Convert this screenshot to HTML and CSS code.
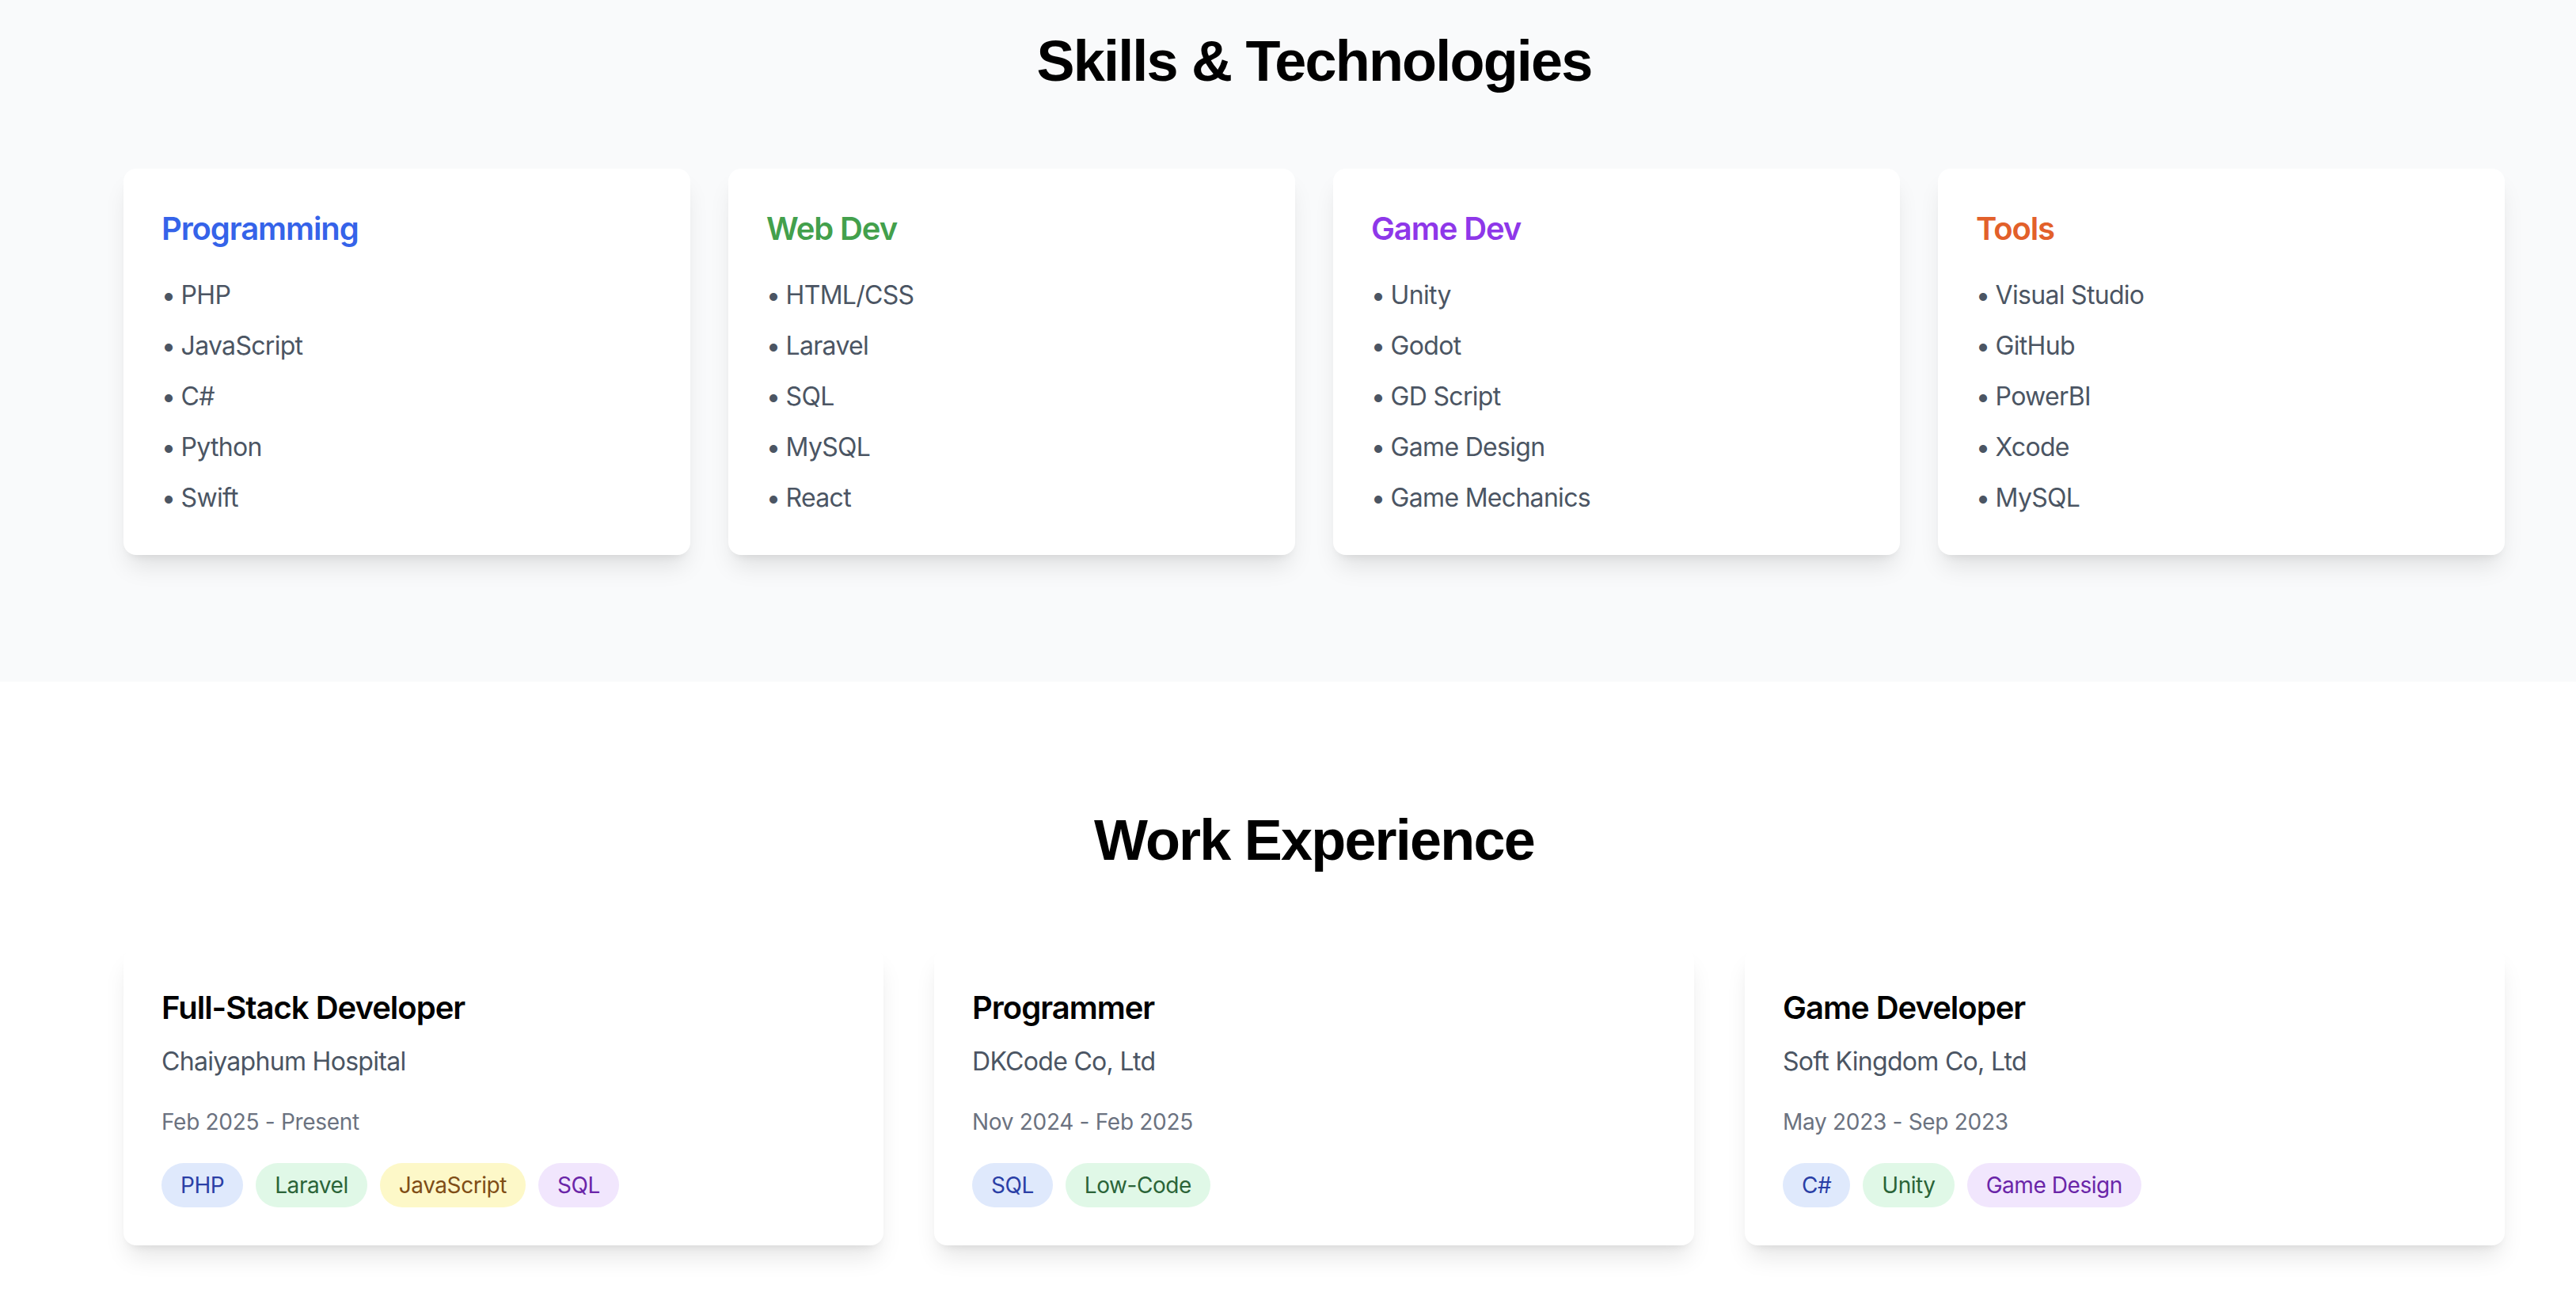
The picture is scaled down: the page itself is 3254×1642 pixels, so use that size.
FILE: index.html
```html
<!DOCTYPE html>
<html lang="en">
<head>
<meta charset="utf-8">
<title>Skills &amp; Experience</title>
<link rel="stylesheet" href="styles.css">
</head>
<body>
<section class="section section-gray">
  <div class="container">
    <h2 class="section-title">Skills &amp; Technologies</h2>
    <div class="skills-grid">
      <div class="card">
        <h3 class="skill-title blue">Programming</h3>
        <ul class="skill-list">
          <li><span class="dot">•</span> PHP</li>
          <li><span class="dot">•</span> JavaScript</li>
          <li><span class="dot">•</span> C#</li>
          <li><span class="dot">•</span> Python</li>
          <li><span class="dot">•</span> Swift</li>
        </ul>
      </div>
      <div class="card">
        <h3 class="skill-title green">Web Dev</h3>
        <ul class="skill-list">
          <li><span class="dot">•</span> HTML/CSS</li>
          <li><span class="dot">•</span> Laravel</li>
          <li><span class="dot">•</span> SQL</li>
          <li><span class="dot">•</span> MySQL</li>
          <li><span class="dot">•</span> React</li>
        </ul>
      </div>
      <div class="card">
        <h3 class="skill-title purple">Game Dev</h3>
        <ul class="skill-list">
          <li><span class="dot">•</span> Unity</li>
          <li><span class="dot">•</span> Godot</li>
          <li><span class="dot">•</span> GD Script</li>
          <li><span class="dot">•</span> Game Design</li>
          <li><span class="dot">•</span> Game Mechanics</li>
        </ul>
      </div>
      <div class="card">
        <h3 class="skill-title orange">Tools</h3>
        <ul class="skill-list">
          <li><span class="dot">•</span> Visual Studio</li>
          <li><span class="dot">•</span> GitHub</li>
          <li><span class="dot">•</span> PowerBI</li>
          <li><span class="dot">•</span> Xcode</li>
          <li><span class="dot">•</span> MySQL</li>
        </ul>
      </div>
    </div>
  </div>
</section>

<section class="section section-white">
  <div class="container">
    <h2 class="section-title">Work Experience</h2>
    <div class="work-grid">
      <div class="card">
        <h3 class="job-title">Full-Stack Developer</h3>
        <p class="company">Chaiyaphum Hospital</p>
        <p class="dates">Feb 2025 - Present</p>
        <div class="tags">
          <span class="tag tag-blue">PHP</span>
          <span class="tag tag-green">Laravel</span>
          <span class="tag tag-yellow">JavaScript</span>
          <span class="tag tag-purple">SQL</span>
        </div>
      </div>
      <div class="card">
        <h3 class="job-title">Programmer</h3>
        <p class="company">DKCode Co, Ltd</p>
        <p class="dates">Nov 2024 - Feb 2025</p>
        <div class="tags">
          <span class="tag tag-blue">SQL</span>
          <span class="tag tag-green">Low-Code</span>
        </div>
      </div>
      <div class="card">
        <h3 class="job-title">Game Developer</h3>
        <p class="company">Soft Kingdom Co, Ltd</p>
        <p class="dates">May 2023 - Sep 2023</p>
        <div class="tags">
          <span class="tag tag-blue">C#</span>
          <span class="tag tag-green">Unity</span>
          <span class="tag tag-purple">Game Design</span>
        </div>
      </div>
    </div>
  </div>
</section>
</body>
</html>
```

FILE: styles.css
```css
* { box-sizing: border-box; }

html, body {
  margin: 0;
  padding: 0;
  background: #ffffff;
  font-family: Inter, "Noto Sans", sans-serif;
  color: #111827;
}

.section { padding: 160px 0; }
.section-gray { background: #f9fafb; padding-top: 37px; }
.section-white { background: #ffffff; }

.container {
  width: 3008px;
  margin-left: 156px;
}

.section-title {
  margin: 0 0 96px;
  text-align: center;
  font-family: "Liberation Sans", Arial, sans-serif;
  font-weight: 700;
  font-size: 72px;
  line-height: 80px;
  letter-spacing: -1.8px;
  color: #000000;
}

.skills-grid {
  display: grid;
  grid-template-columns: repeat(4, 1fr);
  gap: 48px;
}

.work-grid {
  display: grid;
  grid-template-columns: repeat(3, 1fr);
  gap: 64px;
}

.card {
  background: #ffffff;
  border-radius: 16px;
  padding: 48px;
  box-shadow: 0 20px 30px -6px rgba(0, 0, 0, 0.1), 0 8px 12px -8px rgba(0, 0, 0, 0.1);
}

.skill-title {
  margin: 0 0 32px;
  font-size: 40px;
  line-height: 56px;
  font-weight: 600;
  letter-spacing: -1.1px;
}

.blue { color: #3563e9; }
.green { color: #43a04c; }
.purple { color: #8e37e9; }
.orange { color: #e2602a; }

.skill-list {
  list-style: none;
  margin: 0;
  padding: 0;
  display: flex;
  flex-direction: column;
  gap: 16px;
}

.skill-list li {
  font-size: 32px;
  line-height: 48px;
  color: #4b5563;
  letter-spacing: -0.7px;
}

.dot {
  margin-right: -1px;
}

.job-title {
  margin: 0 0 16px;
  font-size: 40px;
  line-height: 56px;
  font-weight: 600;
  color: #000000;
  letter-spacing: -1px;
}

.company {
  margin: 0 0 32px;
  font-size: 32px;
  line-height: 48px;
  color: #4b5563;
  letter-spacing: -0.7px;
}

.dates {
  margin: 0 0 32px;
  font-size: 28px;
  line-height: 40px;
  color: #6b7280;
  letter-spacing: -0.3px;
}

.tags {
  display: flex;
  flex-wrap: wrap;
  gap: 16px;
}

.tag {
  display: inline-block;
  padding: 8px 24px;
  border-radius: 9999px;
  font-size: 28px;
  line-height: 40px;
  letter-spacing: -0.45px;
}

.tag-blue { background: #dfe9fc; color: #2a3fa6; }
.tag-green { background: #e0f8e7; color: #2b6438; }
.tag-yellow { background: #fdf8c8; color: #7f4d16; }
.tag-purple { background: #f1e6fd; color: #6a25a8; }
```
